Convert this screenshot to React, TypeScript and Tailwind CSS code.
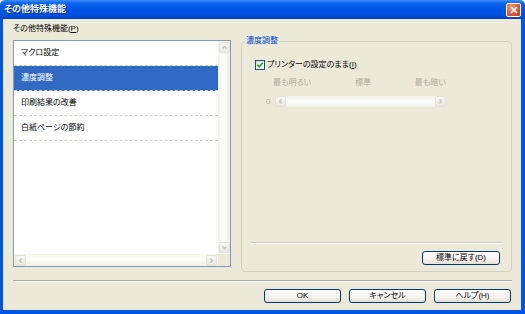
import React from "react";

type Dir = "up" | "down" | "left" | "right";

const Chevron = ({ dir }: { dir: Dir }) => {
  const paths: Record<Dir, string> = {
    up: "M1.5 4.5 L3.5 2.5 L5.5 4.5",
    down: "M1.5 2.5 L3.5 4.5 L5.5 2.5",
    left: "M4.5 1.5 L2.5 3.5 L4.5 5.5",
    right: "M2.5 1.5 L4.5 3.5 L2.5 5.5",
  };
  return (
    <svg width="7" height="7" viewBox="0 0 7 7">
      <path d={paths[dir]} fill="none" stroke="#C2C0B3" strokeWidth="1.3" />
    </svg>
  );
};

const ArrowBtn = ({ dir }: { dir: Dir }) => (
  <div className="w-[11px] h-[11px] rounded-[2px] border border-[#E3E1D7] bg-[linear-gradient(to_bottom,#F7F6F2,#EAE8DF)] flex items-center justify-center shrink-0">
    <Chevron dir={dir} />
  </div>
);

const XpButton = ({ label, w }: { label: string; w: string }) => (
  <div
    className={`${w} h-[14px] rounded-[3px] border border-[#003C74] bg-[linear-gradient(to_bottom,#FFFFFF,#F5F4EF_55%,#E3DFD3)] flex items-center justify-center text-[8px] leading-none text-black`}
  >
    {label}
  </div>
);

const rows = ["マクロ設定", "濃度調整", "印刷結果の改善", "白紙ページの節約"];

export default function App() {
  return (
    <div className="w-[525px] h-[314px] flex flex-col font-['Liberation_Sans','Noto_Sans_CJK_JP',sans-serif] [font-feature-settings:'palt'] select-none">
      {/* Title bar */}
      <div className="h-[19px] shrink-0 flex items-center justify-between pl-[4px] pr-[4px] rounded-t-[5px] bg-[linear-gradient(to_bottom,#3E8EF8_0%,#0A62EC_18%,#0055E5_50%,#0052DE_80%,#003FC2_100%)]">
        <span className="text-white font-bold text-[9px] leading-none [text-shadow:1px_1px_0_#0A2C8A]">
          その他特殊機能
        </span>
        <div className="w-[15px] h-[14px] rounded-[2px] border border-white bg-[radial-gradient(circle_at_35%_30%,#F09B7E,#E0532C_60%,#C43B16)] flex items-center justify-center">
          <svg width="8" height="8" viewBox="0 0 8 8">
            <path d="M1 1 L7 7 M7 1 L1 7" stroke="white" strokeWidth="1.6" />
          </svg>
        </div>
      </div>

      {/* Body */}
      <div className="flex-1 flex flex-col bg-[#ECE9D8] border-l-[3px] border-r-[4px] border-b-[4px] border-[#0055E5] pl-[10px] pr-[9px]">
        <div className="flex gap-[10px]">
          {/* Left column */}
          <div className="w-[218px] flex flex-col pt-[4px]">
            <div className="h-[12px] leading-[12px] text-[8px] text-black">その他特殊機能(<span className="underline">P</span>)</div>
            <div className="mt-[5px] h-[227px] border border-[#7F9DB9] bg-white flex flex-col">
              <div className="flex-1 flex min-h-0">
                <div className="flex-1 flex flex-col">
                  {rows.map((r, i) => (
                    <div
                      key={r}
                      className={`h-[25px] flex items-center pl-[7px] text-[8px] border-b border-dashed border-[#D4D1C6] ${
                        i === 1 ? "bg-[#316AC5] text-white" : "text-black"
                      }`}
                    >
                      {r}
                    </div>
                  ))}
                </div>
                <div className="w-[12px] flex flex-col items-center justify-between py-[1px] bg-[linear-gradient(to_right,#F3F2EC,#FDFDFB_45%,#EFEEE7)]">
                  <ArrowBtn dir="up" />
                  <ArrowBtn dir="down" />
                </div>
              </div>
              <div className="h-[12px] flex">
                <div className="flex-1 flex items-center justify-between px-[1px] bg-[linear-gradient(to_bottom,#F3F2EC,#FDFDFB_45%,#EFEEE7)]">
                  <ArrowBtn dir="left" />
                  <ArrowBtn dir="right" />
                </div>
                <div className="w-[12px] bg-[#ECE9D8]" />
              </div>
            </div>
          </div>

          {/* Right group box */}
          <fieldset className="mt-[16px] w-[271px] h-[237px] border border-[#D0D0BF] rounded-[4px] pl-[3px] pr-0 pb-0 m-0 min-w-0">
            <legend className="px-[1px] text-[8px] leading-[12px] text-[#0046D5]">濃度調整</legend>
            <div className="flex flex-col h-[224px] -ml-[3px]">
              <div className="mt-[13px] ml-[13px] flex items-center h-[10px]">
                <div className="w-[10px] h-[10px] border border-[#1C5180] bg-[linear-gradient(135deg,#DCDCD7,#FFFFFF)] flex items-center justify-center">
                  <svg width="8" height="8" viewBox="0 0 8 8">
                    <path d="M1.3 3.8 L3.2 5.8 L6.8 1.8" fill="none" stroke="#21A121" strokeWidth="1.6" />
                  </svg>
                </div>
                <span className="ml-[2px] text-[8px] text-black leading-none">
                  プリンターの設定のまま(<span className="underline">I</span>)
                </span>
              </div>
              <div className="mt-[8px] ml-[31px] w-[173px] flex justify-between text-[8px] leading-[10px] text-[#ACA899]">
                <span>最も明るい</span>
                <span>標準</span>
                <span>最も暗い</span>
              </div>
              <div className="mt-[8px] ml-[24px] flex items-center">
                <span className="w-[9px] text-[8px] leading-none text-[#ACA899]">0</span>
                <div className="w-[171px] h-[11px] flex items-center justify-between bg-[linear-gradient(to_bottom,#F3F2EC,#FDFDFB_45%,#EFEEE7)]">
                  <ArrowBtn dir="left" />
                  <ArrowBtn dir="right" />
                </div>
              </div>
              <div className="flex-1" />
              <div className="mx-[8px] h-[2px] border-t border-[#D0CDBD] border-b border-b-white" />
              <div className="mt-[7px] mb-[6px] mr-[11px] flex justify-end">
                <XpButton label="標準に戻す(D)" w="w-[78px]" />
              </div>
            </div>
          </fieldset>
        </div>

        {/* Separator */}
        <div className="mt-[8px] h-[2px] border-t border-[#ACA899] border-b border-b-white" />

        {/* Buttons */}
        <div className="mt-[7px] flex justify-end gap-[8px] pr-[1px]">
          <XpButton label="OK" w="w-[77px]" />
          <XpButton label="キャンセル" w="w-[77px]" />
          <XpButton label="ヘルプ(H)" w="w-[77px]" />
        </div>
      </div>
    </div>
  );
}
